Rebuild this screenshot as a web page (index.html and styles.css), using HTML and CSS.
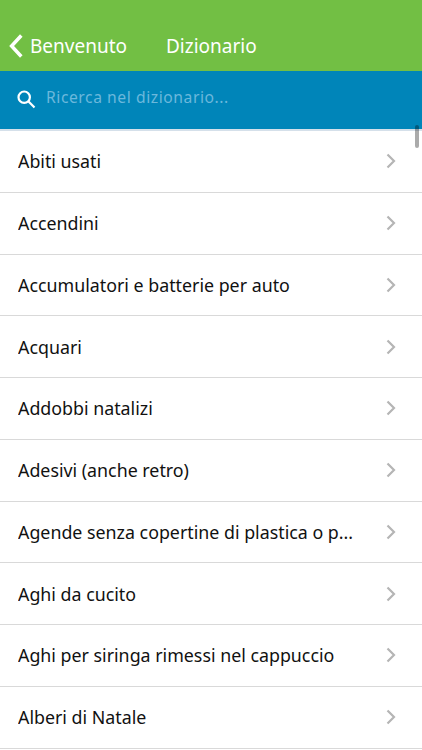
FILE: index.html
```html
<!DOCTYPE html>
<html lang="it">
<head>
<meta charset="utf-8">
<title>Dizionario</title>
<link rel="stylesheet" href="styles.css">
</head>
<body>
<header class="bar">
<a class="back"><svg class="back-icon" viewBox="0 0 14 24"><path d="M12.300 1.500 2.600 12l9.700 10.500"/></svg><span class="narrow">Benvenuto</span></a>
<h1 class="title narrow">Dizionario</h1>
</header>
<div class="search">
<svg class="search-icon" viewBox="0 0 20 20"><circle cx="7.200" cy="7.200" r="5.700"/><path d="M11.300 11.300 17.500 17.500"/></svg>
<span class="placeholder narrow">Ricerca nel dizionario...</span>
</div>
<ul class="list">
<li class="row"><span class="label narrow">Abiti usati</span><svg class="chev" viewBox="0 0 10 16"><path d="m1.500 1.500 6.500 6.500-6.500 6.500"/></svg></li>
<li class="row"><span class="label narrow">Accendini</span><svg class="chev" viewBox="0 0 10 16"><path d="m1.500 1.500 6.500 6.500-6.500 6.500"/></svg></li>
<li class="row"><span class="label narrow">Accumulatori e batterie per auto</span><svg class="chev" viewBox="0 0 10 16"><path d="m1.500 1.500 6.500 6.500-6.500 6.500"/></svg></li>
<li class="row"><span class="label narrow">Acquari</span><svg class="chev" viewBox="0 0 10 16"><path d="m1.500 1.500 6.500 6.500-6.500 6.500"/></svg></li>
<li class="row"><span class="label narrow">Addobbi natalizi</span><svg class="chev" viewBox="0 0 10 16"><path d="m1.500 1.500 6.500 6.500-6.500 6.500"/></svg></li>
<li class="row"><span class="label narrow">Adesivi (anche retro)</span><svg class="chev" viewBox="0 0 10 16"><path d="m1.500 1.500 6.500 6.500-6.500 6.500"/></svg></li>
<li class="row"><span class="label narrow">Agende senza copertine di plastica o p...</span><svg class="chev" viewBox="0 0 10 16"><path d="m1.500 1.500 6.500 6.500-6.500 6.500"/></svg></li>
<li class="row"><span class="label narrow">Aghi da cucito</span><svg class="chev" viewBox="0 0 10 16"><path d="m1.500 1.500 6.500 6.500-6.500 6.500"/></svg></li>
<li class="row"><span class="label narrow">Aghi per siringa rimessi nel cappuccio</span><svg class="chev" viewBox="0 0 10 16"><path d="m1.500 1.500 6.500 6.500-6.500 6.500"/></svg></li>
<li class="row"><span class="label narrow">Alberi di Natale</span><svg class="chev" viewBox="0 0 10 16"><path d="m1.500 1.500 6.500 6.500-6.500 6.500"/></svg></li>
</ul>
<div class="scrollbar"></div>
</body>
</html>
```
FILE: styles.css
```css
* { box-sizing: border-box; }
body { margin: 0; height: 750px; overflow: hidden; position: relative; background: #fff; color: #111; font-family: "Noto Sans", sans-serif; }
.narrow { display: block; transform: scaleX(.95); transform-origin: left center; }
.bar { height: 71px; padding: 20px 0 0 9px; background: #72bf44; color: #fff; display: flex; align-items: center; font-size: 20px; }
.back { width: 156.500px; display: flex; align-items: center; gap: 6.500px; }
.back-icon { width: 14px; height: 24px; flex: none; fill: none; stroke: #fff; stroke-width: 3.500; }
.title { margin: 0; font-size: 20px; font-weight: 400; }
.search { height: 60px; padding: 0 17px; display: flex; align-items: center; background: #0085b9; border-bottom: 2px solid #d5e0ea; }
.search-icon { width: 20px; height: 20px; margin-right: 9px; fill: none; stroke: #fff; stroke-width: 2.2; }
.placeholder { color: #6bb8dc; font-size: 16.500px; letter-spacing: .58px; padding-bottom: 8px; }
.list { list-style: none; margin: 0; padding: 0; }
.row { height: 61.75px; padding: 0 26px 0 18px; display: flex; align-items: center; justify-content: space-between; border-bottom: 1px solid #d9d9d9; font-size: 18.700px; white-space: nowrap; }
.label { padding-bottom: 1px; transform: scaleX(.953); }
.chev { width: 10px; height: 16px; flex: none; fill: none; stroke: #b5b5b5; stroke-width: 2.2; }
.scrollbar { position: absolute; right: 3px; top: 125px; width: 4px; height: 23px; border-radius: 2px; background: rgba(0,0,0,.33); }
```
